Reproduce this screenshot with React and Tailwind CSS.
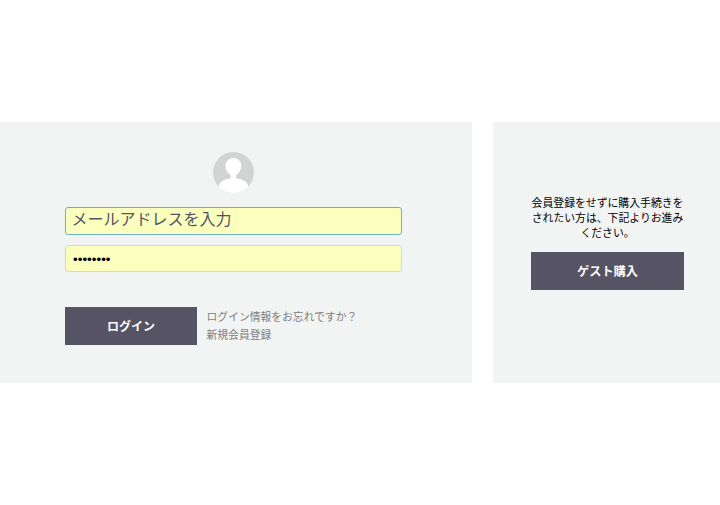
import React from "react";

function Avatar() {
  return (
    <svg width="41" height="41" viewBox="0 0 41 41" className="block">
      <defs>
        <clipPath id="avatar-circle">
          <circle cx="20.5" cy="20.5" r="20.5" />
        </clipPath>
      </defs>
      <g clipPath="url(#avatar-circle)">
        <rect width="41" height="41" fill="#d2d3d3" />
        <path
          fill="#fff"
          d="M20.4 6C15.4 6 12.3 9.6 12.6 14.4C12.8 18.2 14.8 21.2 17.7 23V25.8C17.2 26.8 14.6 26.8 12.4 27.5C8.6 28.7 5.9 31.4 5.4 35V41H35.4V35C34.9 31.4 32.2 28.7 28.4 27.5C26.2 26.8 23.6 26.8 23.1 25.8V23C26 21.2 28 18.2 28.2 14.4C28.5 9.6 25.4 6 20.4 6Z"
        />
      </g>
    </svg>
  );
}

export default function App() {
  return (
    <div className="flex h-[505px] w-[720px] items-start gap-[21px] overflow-hidden bg-white pt-[122px] font-['Noto_Sans_CJK_JP',sans-serif]">

      {/* Member login */}
      <section className="h-[261px] w-[472px] shrink-0 bg-[#f2f4f4] pl-[65px] pt-[30px]">
        <form className="w-[337px]" onSubmit={(e) => e.preventDefault()}>
          <div className="flex justify-center">
            <Avatar />
          </div>

          <input
            type="text"
            defaultValue="メールアドレスを入力"
            className="mt-[14px] block h-[28px] w-full rounded-[3px] border border-[#6fb0c6] bg-[#faffbd] px-[5.5px] pb-[6px] text-[16px] leading-[20px] text-[#555463] outline-none"
          />
          <input
            type="password"
            defaultValue="password"
            className="mt-[10px] block h-[27px] w-full rounded-[3px] border border-[#d3d5da] bg-[#faffbd] px-[7px] pt-[2px] font-['Liberation_Sans',sans-serif] text-[13.4px] text-black outline-none"
          />

          <div className="mt-[35px] flex items-start">
            <button
              type="submit"
              className="h-[38px] w-[132px] bg-[#555364] text-[12px] font-bold text-white"
            >
              ログイン
            </button>
            <div className="ml-[9.5px] whitespace-nowrap text-[10.8px] leading-[18px] text-[#7d7d7d]">
              <a href="#" className="block">ログイン情報をお忘れですか？</a>
              <a href="#" className="block">新規会員登録</a>
            </div>
          </div>
        </form>
      </section>

      {/* Guest checkout */}
      <section className="flex h-[261px] w-[227px] shrink-0 flex-col bg-[#f2f4f4] pl-[38px] pt-[73px]">
        <p className="w-[153px] text-center text-[10.85px] leading-[15px] text-black">
          会員登録をせずに購入手続きをされたい方は、下記よりお進みください。
        </p>
        <button
          type="button"
          className="mt-[12px] h-[38px] w-[153px] bg-[#555364] text-[12.2px] font-bold text-white"
        >
          ゲスト購入
        </button>
      </section>

    </div>
  );
}
